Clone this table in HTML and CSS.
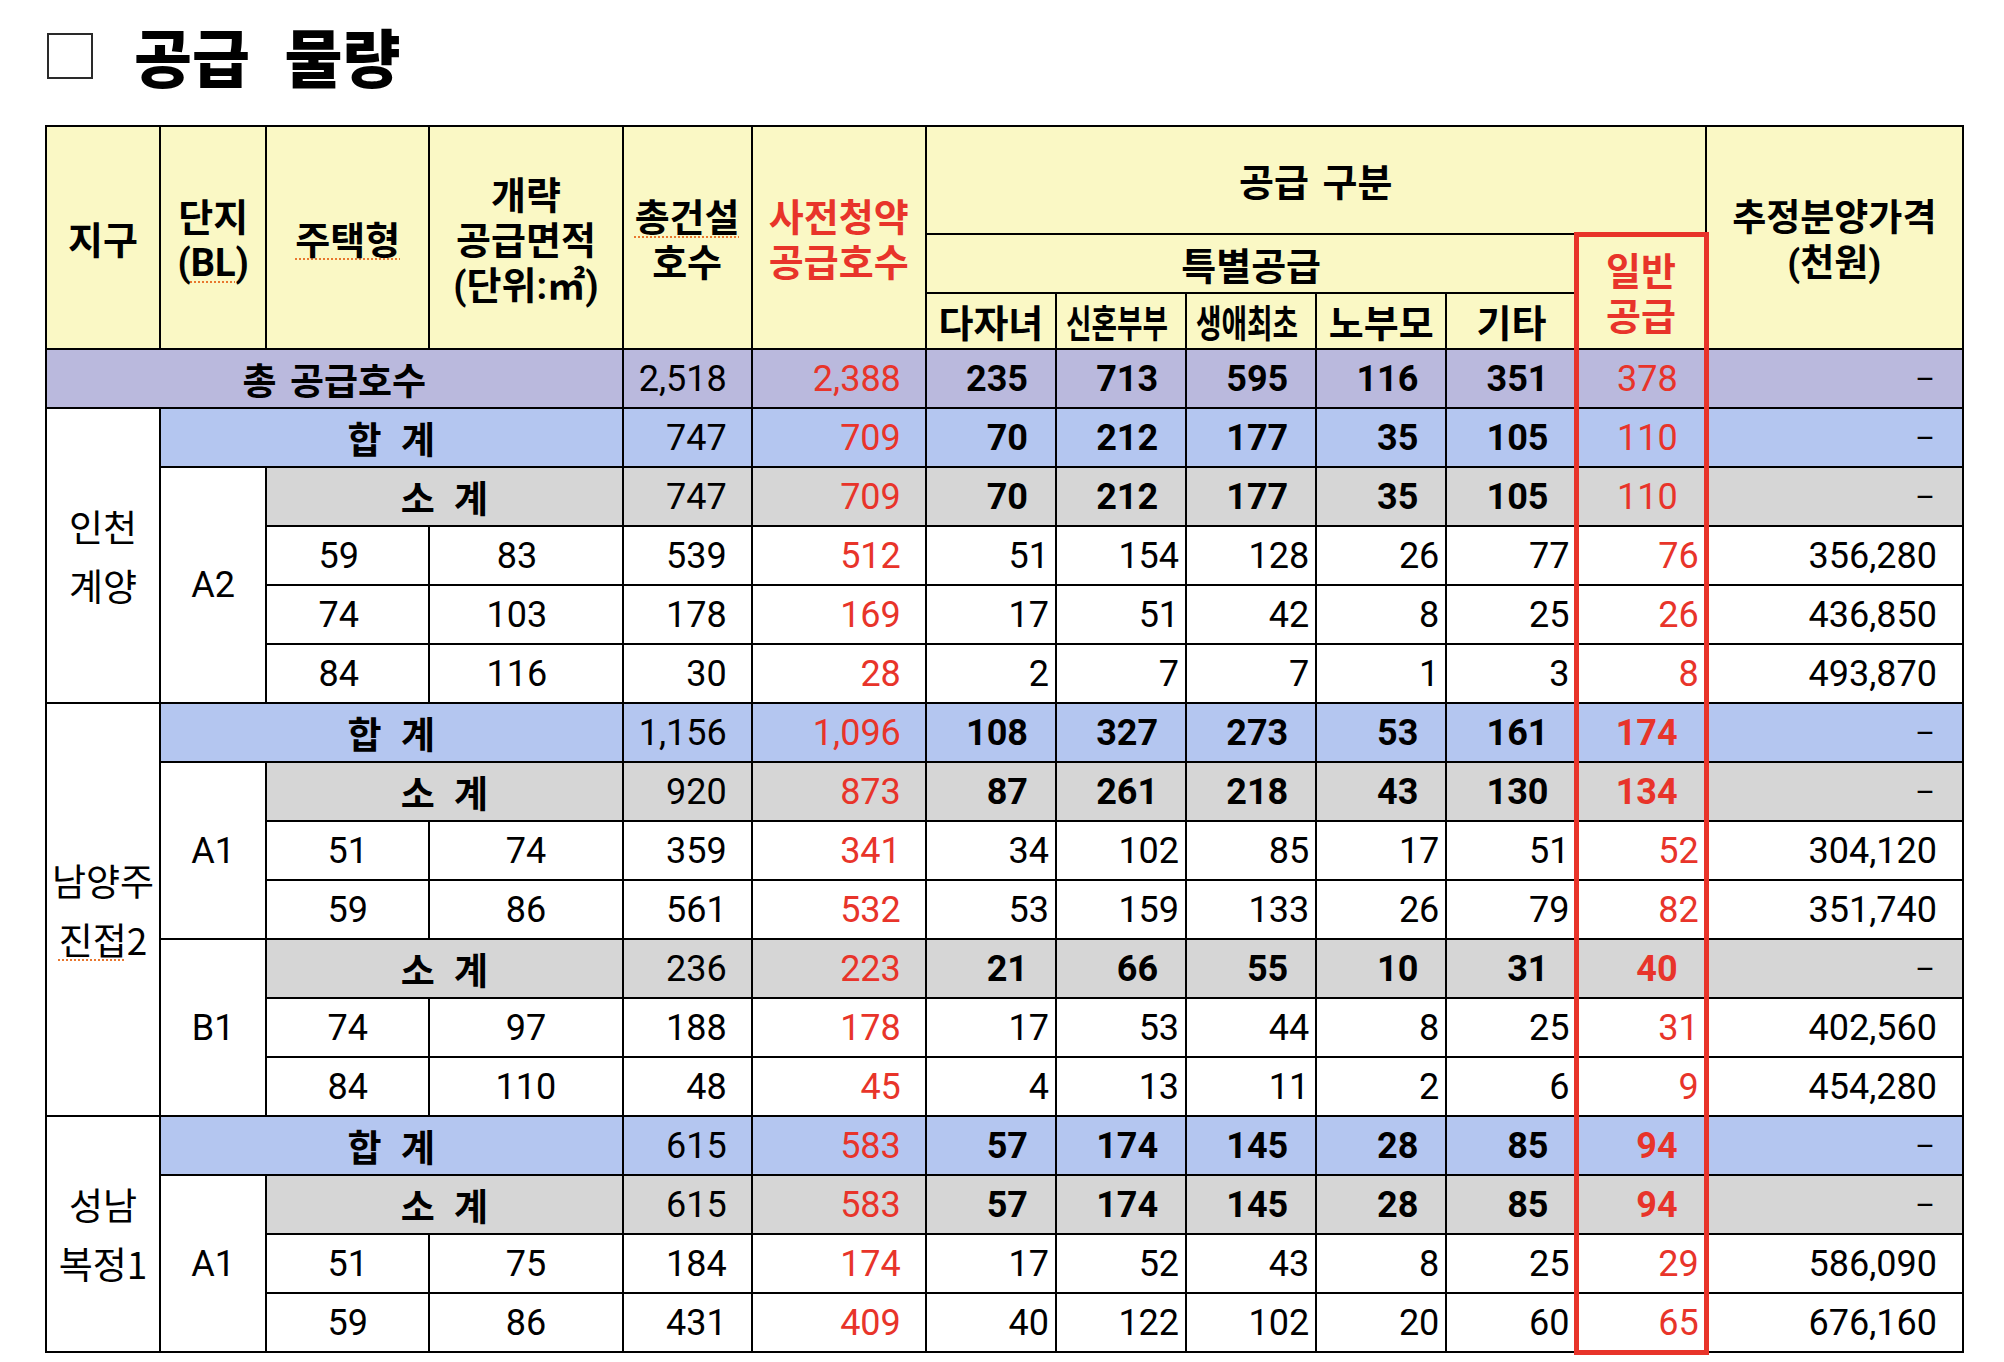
FILE: index.html
```html
<!DOCTYPE html>
<html lang="ko">
<head>
<meta charset="utf-8">
<title>공급 물량</title>
<link rel="stylesheet" href="styles.css">
</head>
<body>
<div class="sheet">
  <div class="title">
    <span class="checkbox"></span>
    <h1 class="title-text">공급 물량</h1>
  </div>

  <table class="supply">
    <colgroup>
      <col class="w-district"><col class="w-block"><col class="w-type"><col class="w-area">
      <col class="w-total"><col class="w-pre">
      <col class="w-sp"><col class="w-sp"><col class="w-sp"><col class="w-sp"><col class="w-sp">
      <col class="w-gen"><col class="w-price">
    </colgroup>
    <thead>
      <tr class="h1">
        <th rowspan="3">지구</th>
        <th rowspan="3">단지<br>(<span class="sp">BL</span>)</th>
        <th rowspan="3"><span class="sp">주택형</span></th>
        <th rowspan="3">개략<br>공급면적<br>(단위:㎡)</th>
        <th rowspan="3"><span class="sp">총건설</span><br>호수</th>
        <th rowspan="3" class="red">사전청약<br>공급호수</th>
        <th colspan="6" class="wide">공급 구분</th>
        <th rowspan="3" class="price-h">추정분양가격<br>(천원)</th>
      </tr>
      <tr class="h2">
        <th colspan="5">특별공급</th>
        <th rowspan="2" class="red">일반<br>공급</th>
      </tr>
      <tr class="h3">
        <th>다자녀</th>
        <th><span class="sq"><span class="sq-in">신혼부부</span></span></th>
        <th><span class="sq"><span class="sq-in">생애최초</span></span></th>
        <th>노부모</th>
        <th>기타</th>
      </tr>
    </thead>
    <tbody>
      <tr class="total">
        <td colspan="4" class="label grand">총 공급호수</td>
        <td class="a">2,518</td><td class="a red">2,388</td>
        <td class="s">235</td><td class="s">713</td><td class="s">595</td><td class="s">116</td><td class="s">351</td>
        <td class="s red reg">378</td><td class="p dash">–</td>
      </tr>

      <tr class="sum">
        <td rowspan="5" class="district">인천<br>계양</td>
        <td colspan="3" class="label">합 계</td>
        <td class="a">747</td><td class="a red">709</td>
        <td class="s">70</td><td class="s">212</td><td class="s">177</td><td class="s">35</td><td class="s">105</td>
        <td class="s red reg">110</td><td class="p dash">–</td>
      </tr>
      <tr class="sub">
        <td rowspan="4" class="block">A2</td>
        <td colspan="2" class="label">소 계</td>
        <td class="a">747</td><td class="a red">709</td>
        <td class="s">70</td><td class="s">212</td><td class="s">177</td><td class="s">35</td><td class="s">105</td>
        <td class="s red reg">110</td><td class="p dash">–</td>
      </tr>
      <tr class="row">
        <td class="c off">59</td><td class="c off">83</td>
        <td class="a">539</td><td class="a red">512</td>
        <td class="s">51</td><td class="s">154</td><td class="s">128</td><td class="s">26</td><td class="s">77</td>
        <td class="s red">76</td><td class="p">356,280</td>
      </tr>
      <tr class="row">
        <td class="c off">74</td><td class="c off">103</td>
        <td class="a">178</td><td class="a red">169</td>
        <td class="s">17</td><td class="s">51</td><td class="s">42</td><td class="s">8</td><td class="s">25</td>
        <td class="s red">26</td><td class="p">436,850</td>
      </tr>
      <tr class="row">
        <td class="c off">84</td><td class="c off">116</td>
        <td class="a">30</td><td class="a red">28</td>
        <td class="s">2</td><td class="s">7</td><td class="s">7</td><td class="s">1</td><td class="s">3</td>
        <td class="s red">8</td><td class="p">493,870</td>
      </tr>

      <tr class="sum">
        <td rowspan="7" class="district">남양주<br><span class="sp">진접</span>2</td>
        <td colspan="3" class="label">합 계</td>
        <td class="a">1,156</td><td class="a red">1,096</td>
        <td class="s">108</td><td class="s">327</td><td class="s">273</td><td class="s">53</td><td class="s">161</td>
        <td class="s red">174</td><td class="p dash">–</td>
      </tr>
      <tr class="sub">
        <td rowspan="3" class="block">A1</td>
        <td colspan="2" class="label">소 계</td>
        <td class="a">920</td><td class="a red">873</td>
        <td class="s">87</td><td class="s">261</td><td class="s">218</td><td class="s">43</td><td class="s">130</td>
        <td class="s red">134</td><td class="p dash">–</td>
      </tr>
      <tr class="row">
        <td class="c">51</td><td class="c">74</td>
        <td class="a">359</td><td class="a red">341</td>
        <td class="s">34</td><td class="s">102</td><td class="s">85</td><td class="s">17</td><td class="s">51</td>
        <td class="s red">52</td><td class="p">304,120</td>
      </tr>
      <tr class="row">
        <td class="c">59</td><td class="c">86</td>
        <td class="a">561</td><td class="a red">532</td>
        <td class="s">53</td><td class="s">159</td><td class="s">133</td><td class="s">26</td><td class="s">79</td>
        <td class="s red">82</td><td class="p">351,740</td>
      </tr>
      <tr class="sub">
        <td rowspan="3" class="block">B1</td>
        <td colspan="2" class="label">소 계</td>
        <td class="a">236</td><td class="a red">223</td>
        <td class="s">21</td><td class="s">66</td><td class="s">55</td><td class="s">10</td><td class="s">31</td>
        <td class="s red">40</td><td class="p dash">–</td>
      </tr>
      <tr class="row">
        <td class="c">74</td><td class="c">97</td>
        <td class="a">188</td><td class="a red">178</td>
        <td class="s">17</td><td class="s">53</td><td class="s">44</td><td class="s">8</td><td class="s">25</td>
        <td class="s red">31</td><td class="p">402,560</td>
      </tr>
      <tr class="row">
        <td class="c">84</td><td class="c">110</td>
        <td class="a">48</td><td class="a red">45</td>
        <td class="s">4</td><td class="s">13</td><td class="s">11</td><td class="s">2</td><td class="s">6</td>
        <td class="s red">9</td><td class="p">454,280</td>
      </tr>

      <tr class="sum">
        <td rowspan="4" class="district">성남<br>복정1</td>
        <td colspan="3" class="label">합 계</td>
        <td class="a">615</td><td class="a red">583</td>
        <td class="s">57</td><td class="s">174</td><td class="s">145</td><td class="s">28</td><td class="s">85</td>
        <td class="s red">94</td><td class="p dash">–</td>
      </tr>
      <tr class="sub">
        <td rowspan="3" class="block">A1</td>
        <td colspan="2" class="label">소 계</td>
        <td class="a">615</td><td class="a red">583</td>
        <td class="s">57</td><td class="s">174</td><td class="s">145</td><td class="s">28</td><td class="s">85</td>
        <td class="s red">94</td><td class="p dash">–</td>
      </tr>
      <tr class="row">
        <td class="c">51</td><td class="c">75</td>
        <td class="a">184</td><td class="a red">174</td>
        <td class="s">17</td><td class="s">52</td><td class="s">43</td><td class="s">8</td><td class="s">25</td>
        <td class="s red">29</td><td class="p">586,090</td>
      </tr>
      <tr class="row">
        <td class="c">59</td><td class="c">86</td>
        <td class="a">431</td><td class="a red">409</td>
        <td class="s">40</td><td class="s">122</td><td class="s">102</td><td class="s">20</td><td class="s">60</td>
        <td class="s red">65</td><td class="p">676,160</td>
      </tr>
    </tbody>
  </table>

  <div class="red-box"></div>
</div>
</body>
</html>
```

FILE: styles.css
```css
* { box-sizing: border-box; }

body {
  margin: 0;
  background: #ffffff;
  color: #000000;
  font-family: Roboto, "Noto Sans CJK KR", sans-serif;
}

.sheet {
  position: relative;
  width: 2004px;
  height: 1362px;
}

.title {
  display: flex;
  align-items: center;
  gap: 41px;
  height: 112px;
  padding-left: 47px;
}

.checkbox {
  width: 46px;
  height: 46px;
  border: 2px solid #2a2a2a;
}

.title-text {
  margin: 0;
  font-family: "Noto Sans CJK KR", sans-serif;
  font-size: 63px;
  font-weight: 900;
  line-height: 1;
  word-spacing: 17px;
  position: relative;
  top: -2px;
}

.supply {
  border-collapse: collapse;
  table-layout: fixed;
  width: 1919px;
  margin: 13px 0 0 45px;
  font-size: 36px;
}

.w-district { width: 114px; }
.w-block { width: 106px; }
.w-type { width: 163px; }
.w-area { width: 193px; }
.w-total { width: 129px; }
.w-pre { width: 174px; }
.w-sp { width: 130px; }
.w-gen { width: 129px; }
.w-price { width: 257px; }

.supply th,
.supply td {
  border: 2px solid #000;
  padding: 0;
  white-space: nowrap;
  vertical-align: middle;
}

.supply th {
  background: #faf8c5;
  font-family: Roboto, "Noto Sans CJK KR", sans-serif;
  font-weight: 700;
  font-size: 38px;
  line-height: 45px;
  text-align: center;
  padding-top: 7px;
}

.supply th.wide { word-spacing: 4px; }
.supply th.price-h { font-size: 37px; }

.h1 { height: 108px; }
.h2 { height: 59px; }
.h3 { height: 56px; }

.supply tbody tr { height: 59px; }

.sq {
  display: inline-block;
  width: 111px;
  text-align: left;
  vertical-align: top;
}
.sq-in {
  display: inline-block;
  transform: scaleX(0.73);
  transform-origin: left center;
}

.sp {
  text-decoration-line: underline;
  text-decoration-style: dotted;
  text-decoration-color: #e8772e;
  text-decoration-thickness: 2px;
  text-underline-offset: 5px;
}

.total td { background: #bab9dd; }
.sum td { background: #b4c6f0; }
.sub td { background: #d6d6d6; }
.row td { background: #ffffff; }

.supply td.district,
.supply td.block {
  background: #ffffff;
  text-align: center;
}

.supply td.district {
  font-family: "Noto Sans CJK KR", Roboto, sans-serif;
  font-size: 37px;
  line-height: 59px;
}

.supply td.label {
  text-align: center;
  font-family: "Noto Sans CJK KR", sans-serif;
  font-weight: 700;
  font-size: 37px;
  word-spacing: 9px;
}
.supply td.label.grand { word-spacing: 3px; }

.supply td.c { text-align: center; }
.supply td.c.off { padding-right: 18px; }

.supply td.a { text-align: right; padding-right: 24px; }
.supply td.p { text-align: right; padding-right: 25px; }
.supply td.s { text-align: right; padding-right: 6px; }

.supply .total td.s,
.supply .sum td.s,
.supply .sub td.s {
  padding-right: 27px;
  font-weight: 700;
}
.supply tr td.s.reg { font-weight: 400; }

.supply td.dash {
  font-size: 30px;
  padding-right: 27px;
}

.red { color: #e8342a; }

.red-box {
  position: absolute;
  left: 1574px;
  top: 232px;
  width: 135px;
  height: 1123px;
  border: 5px solid #e8342a;
  pointer-events: none;
}
```
